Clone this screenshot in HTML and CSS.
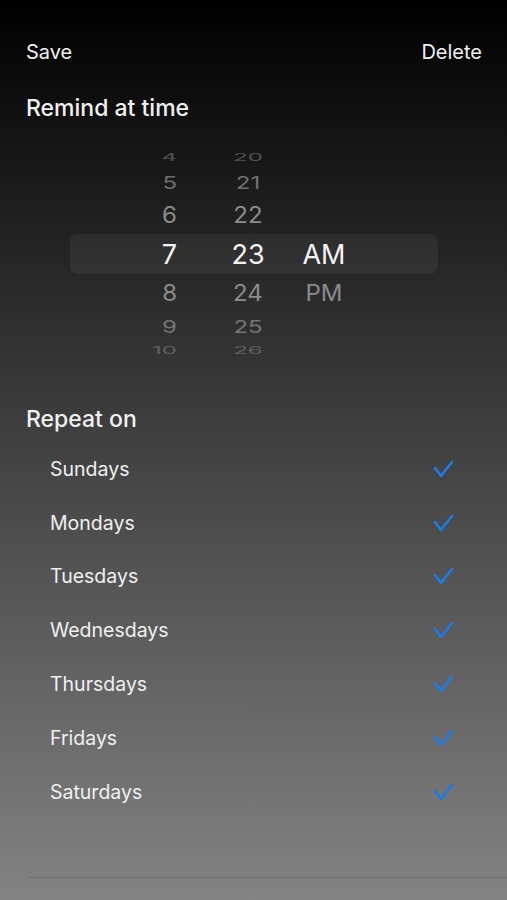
FILE: index.html
```html
<!DOCTYPE html>
<html lang="en">
<head>
    <meta charset="UTF-8">
    <meta name="viewport" content="width=device-width, initial-scale=1.0">
    <title>Reminder</title>
    <link rel="stylesheet" href="styles.css">
</head>
<body>
    <div class="screen">
        <header class="topbar">
            <a href="#" class="topbar-btn">Save</a>
            <a href="#" class="topbar-btn">Delete</a>
        </header>

        <h2 class="section-title">Remind at time</h2>

        <!-- time wheel -->
        <div class="picker">
            <div class="line far3"><span class="hour">4</span><span class="minute">20</span><span class="ampm"></span></div>
            <div class="line far2"><span class="hour">5</span><span class="minute">21</span><span class="ampm"></span></div>
            <div class="line far1"><span class="hour">6</span><span class="minute">22</span><span class="ampm"></span></div>
            <div class="line selected"><span class="hour">7</span><span class="minute">23</span><span class="ampm">AM</span></div>
            <div class="line near1"><span class="hour">8</span><span class="minute">24</span><span class="ampm">PM</span></div>
            <div class="line near2"><span class="hour">9</span><span class="minute">25</span><span class="ampm"></span></div>
            <div class="line near3"><span class="hour">10</span><span class="minute">26</span><span class="ampm"></span></div>
        </div>

        <h2 class="section-title repeat-title">Repeat on</h2>

        <ul class="days">
            <li class="day"><span>Sundays</span><svg class="check" viewBox="0 0 20 18"><path d="M2 8 L8 16 L19 2"/></svg></li>
            <li class="day"><span>Mondays</span><svg class="check" viewBox="0 0 20 18"><path d="M2 8 L8 16 L19 2"/></svg></li>
            <li class="day"><span>Tuesdays</span><svg class="check" viewBox="0 0 20 18"><path d="M2 8 L8 16 L19 2"/></svg></li>
            <li class="day"><span>Wednesdays</span><svg class="check" viewBox="0 0 20 18"><path d="M2 8 L8 16 L19 2"/></svg></li>
            <li class="day"><span>Thursdays</span><svg class="check" viewBox="0 0 20 18"><path d="M2 8 L8 16 L19 2"/></svg></li>
            <li class="day"><span>Fridays</span><svg class="check" viewBox="0 0 20 18"><path d="M2 8 L8 16 L19 2"/></svg></li>
            <li class="day"><span>Saturdays</span><svg class="check" viewBox="0 0 20 18"><path d="M2 8 L8 16 L19 2"/></svg></li>
        </ul>

        <div class="bottom-rule"></div>
    </div>
</body>
</html>
```

FILE: styles.css
```css
/* Basic Reset */
* {
    margin: 0;
    padding: 0;
    box-sizing: border-box;
}

html, body {
    height: 100%;
}

body {
    font-family: Inter, "Noto Sans", sans-serif;
    background: linear-gradient(#000000, #838383);
    color: #f0f0f0;
}

.screen {
    min-height: 900px;
    padding: 0 0 0 26px;
}

/* top bar */
.topbar {
    display: flex;
    justify-content: space-between;
    padding: 38px 25px 0 0;
    height: 92px;
}

.topbar-btn {
    color: #f0f0f0;
    text-decoration: none;
    font-size: 20px;
    line-height: 28px;
}

.section-title {
    font-size: 23px;
    font-weight: 500;
    line-height: 32px;
}

/* picker wheel */
.picker {
    margin: 22px 0 0 44px;
    width: 368px;
}

.line {
    display: grid;
    grid-template-columns: 146px 64px 88px;
    align-items: center;
    font-size: 24px;
    color: #8c8c8c;
}

.line span {
    display: block;
}

.hour {
    text-align: right;
    padding-right: 39px;
}

.minute,
.ampm {
    text-align: center;
}

.far3, .near3 {
    opacity: 0.5;
}

.far3 span, .near3 span {
    line-height: 9px;
    transform: scaleY(0.42);
}

.far3 {
    height: 22px;
}

.near3 {
    height: 20px;
}

.far2, .near2 {
    height: 28px;
    opacity: 0.75;
}

.far2 span, .near2 span {
    transform: scaleY(0.74);
}

.far1, .near1 {
    height: 38px;
}

.far1 span, .near1 span {
    transform: scaleY(0.93);
}

.selected {
    height: 40px;
    background-color: rgba(255, 255, 255, 0.05);
    border-radius: 8px;
    color: #f4f4f4;
    font-size: 27px;
}

/* repeat list */
.repeat-title {
    margin-top: 43px;
}

.days {
    list-style: none;
    margin-top: 7px;
    padding: 0 54px 0 24px;
}

.day {
    display: flex;
    justify-content: space-between;
    align-items: center;
    height: 53.8px;
    font-size: 19.5px;
}

.check {
    width: 20px;
    height: 18px;
    fill: none;
    stroke: #1c7aea;
    stroke-width: 2.6;
    stroke-linecap: round;
    stroke-linejoin: round;
}

.bottom-rule {
    margin-top: 58px;
    margin-left: 2px;
    height: 1px;
    background-color: rgba(0, 0, 0, 0.1);
}
```
